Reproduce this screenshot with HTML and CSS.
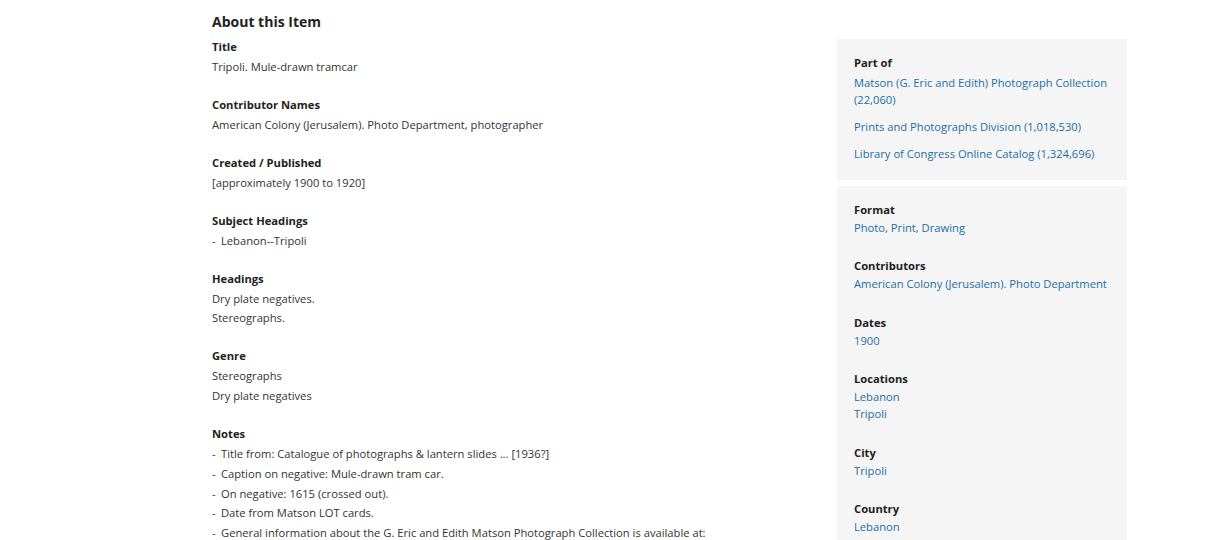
FILE: index.html
```html
<!DOCTYPE html>
<html lang="en">
<head>
<meta charset="utf-8">
<title>About this Item</title>
<link rel="stylesheet" href="styles.css">
</head>
<body>
<div class="page">
  <main class="main">
    <h2 class="heading">About this Item</h2>
    <section class="field">
      <h3 class="label">Title</h3>
      <div class="value">Tripoli. Mule-drawn tramcar</div>
    </section>
    <section class="field">
      <h3 class="label">Contributor Names</h3>
      <div class="value">American Colony (Jerusalem). Photo Department, photographer</div>
    </section>
    <section class="field">
      <h3 class="label">Created / Published</h3>
      <div class="value">[approximately 1900 to 1920]</div>
    </section>
    <section class="field">
      <h3 class="label">Subject Headings</h3>
      <ul class="dash-list">
        <li>Lebanon--Tripoli</li>
      </ul>
    </section>
    <section class="field">
      <h3 class="label">Headings</h3>
      <div class="value">Dry plate negatives.</div>
      <div class="value">Stereographs.</div>
    </section>
    <section class="field">
      <h3 class="label">Genre</h3>
      <div class="value">Stereographs</div>
      <div class="value">Dry plate negatives</div>
    </section>
    <section class="field">
      <h3 class="label">Notes</h3>
      <ul class="dash-list">
        <li>Title from: Catalogue of photographs &amp; lantern slides ... [1936?]</li>
        <li>Caption on negative: Mule-drawn tram car.</li>
        <li>On negative: 1615 (crossed out).</li>
        <li>Date from Matson LOT cards.</li>
        <li>General information about the G. Eric and Edith Matson Photograph Collection is available at:</li>
      </ul>
    </section>
  </main>
  <aside class="side">
    <div class="box box-partof">
      <h3 class="side-label">Part of</h3>
      <a class="part-link" href="#">Matson (G. Eric and Edith) Photograph Collection (22,060)</a>
      <a class="part-link" href="#">Prints and Photographs Division (1,018,530)</a>
      <a class="part-link" href="#">Library of Congress Online Catalog (1,324,696)</a>
    </div>
    <div class="box">
      <section class="side-field">
        <h3 class="side-label">Format</h3>
        <a class="side-link" href="#">Photo, Print, Drawing</a>
      </section>
      <section class="side-field">
        <h3 class="side-label">Contributors</h3>
        <a class="side-link" href="#">American Colony (Jerusalem). Photo Department</a>
      </section>
      <section class="side-field">
        <h3 class="side-label">Dates</h3>
        <a class="side-link" href="#">1900</a>
      </section>
      <section class="side-field">
        <h3 class="side-label">Locations</h3>
        <a class="side-link" href="#">Lebanon</a>
        <a class="side-link" href="#">Tripoli</a>
      </section>
      <section class="side-field">
        <h3 class="side-label">City</h3>
        <a class="side-link" href="#">Tripoli</a>
      </section>
      <section class="side-field">
        <h3 class="side-label">Country</h3>
        <a class="side-link" href="#">Lebanon</a>
      </section>
    </div>
  </aside>
</div>
</body>
</html>
```

FILE: styles.css
```css
html, body {
  margin: 0;
  padding: 0;
  background: #ffffff;
}

body {
  font-family: "Open Sans", "Liberation Sans", sans-serif;
  font-size: 11.2px;
  color: #333333;
  overflow: hidden;
}

.page {
  display: flex;
  align-items: flex-start;
  padding: 12px 0 0 212px;
}

.main {
  width: 625px;
  flex: none;
}

.heading {
  margin: 0 0 4.5px;
  font-size: 14px;
  line-height: 20px;
  font-weight: 700;
  color: #222222;
}

.field {
  margin-bottom: 18.25px;
}

.label {
  margin: 0;
  font-size: 11.2px;
  line-height: 20px;
  font-weight: 700;
  color: #222222;
}

.value {
  line-height: 19.75px;
}

.dash-list {
  list-style: none;
  margin: 0;
  padding: 0;
}

.dash-list li {
  display: flex;
  line-height: 19.75px;
}

.dash-list li::before {
  content: "-";
  flex: none;
  width: 9px;
}

.side {
  width: 290px;
  flex: none;
  margin-top: 27px;
  display: flex;
  flex-direction: column;
  gap: 6px;
}

.box {
  background: #f5f5f5;
  padding: 14px 17px 0;
}

.box-partof {
  padding-bottom: 18px;
}

.side-label {
  margin: 0;
  font-size: 11.2px;
  line-height: 19px;
  font-weight: 700;
  color: #222222;
}

.part-link {
  display: block;
  color: #1a6ea8;
  text-decoration: none;
  line-height: 17px;
  margin-top: 10px;
}

.side-label + .part-link {
  margin-top: 1.5px;
}

.side-field {
  margin-bottom: 20.5px;
}

.side-link {
  display: block;
  color: #1a6ea8;
  text-decoration: none;
  line-height: 17px;
}
```
